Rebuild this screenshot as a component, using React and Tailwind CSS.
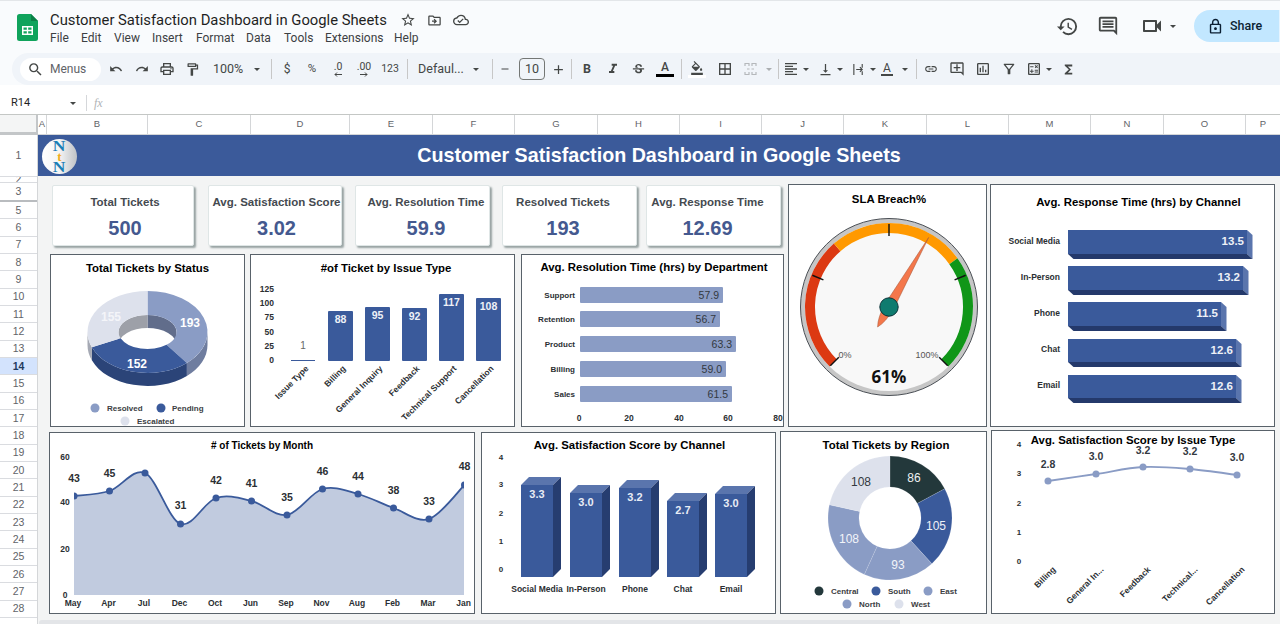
import React from "react";
import {
  MdSearch, MdUndo, MdRedo, MdOutlinePrint, MdOutlineFormatPaint, MdOutlineBorderAll,
  MdFormatAlignLeft, MdVerticalAlignBottom, MdOutlineInsertLink, MdOutlineAddComment, MdOutlineInsertChart,
  MdOutlineFilterAlt, MdOutlineCalculate, MdFunctions, MdHistory, MdOutlineComment, MdOutlineVideocam,
  MdOutlineLock, MdStarBorder, MdOutlineDriveFileMove, MdOutlineCloudDone, MdFormatItalic, MdStrikethroughS,
  MdOutlineFormatColorFill, MdAdd, MdRemove,
} from "react-icons/md";

const BLUE = "#3a5a9b";
const MID = "#8a9cc5";
const PALE = "#dde1ec";
const INK = "#2b2f33";

const pt = (cx, cy, rx, ry, deg) => {
  const r = (deg * Math.PI) / 180;
  return [cx + rx * Math.sin(r), cy - ry * Math.cos(r)];
};

const sector = (cx, cy, rx, ry, irx, iry, a, b) => {
  const [x1, y1] = pt(cx, cy, rx, ry, a);
  const [x2, y2] = pt(cx, cy, rx, ry, b);
  const [x3, y3] = pt(cx, cy, irx, iry, b);
  const [x4, y4] = pt(cx, cy, irx, iry, a);
  const big = b - a > 180 ? 1 : 0;
  return `M${x1} ${y1}A${rx} ${ry} 0 ${big} 1 ${x2} ${y2}L${x3} ${y3}A${irx} ${iry} 0 ${big} 0 ${x4} ${y4}Z`;
};

const wall = (cx, cy, rx, ry, a, b, d) => {
  const [x1, y1] = pt(cx, cy, rx, ry, a);
  const [x2, y2] = pt(cx, cy, rx, ry, b);
  return `M${x1} ${y1}A${rx} ${ry} 0 0 1 ${x2} ${y2}L${x2} ${y2 + d}A${rx} ${ry} 0 0 0 ${x1} ${y1 + d}Z`;
};

const smooth = (p) => {
  let d = `M${p[0][0]} ${p[0][1]}`;
  for (let i = 0; i < p.length - 1; i++) {
    const a = p[i - 1] || p[i];
    const b = p[i];
    const c = p[i + 1];
    const e = p[i + 2] || c;
    d += `C${b[0] + (c[0] - a[0]) / 6} ${b[1] + (c[1] - a[1]) / 6} ${c[0] - (e[0] - b[0]) / 6} ${c[1] - (e[1] - b[1]) / 6} ${c[0]} ${c[1]}`;
  }
  return d;
};

const T = ({ x, y, s = 8, w = 700, c = INK, a = "middle", rot, children }) => (
  <text
    x={x}
    y={y}
    dy=".35em"
    fontSize={s}
    fontWeight={w}
    fill={c}
    textAnchor={a}
    transform={rot ? `rotate(${rot} ${x} ${y})` : undefined}
  >
    {children}
  </text>
);

const Card = ({ x, y, w, h, th, cls, titleCls, title, children }) => (
  <div className={`shrink-0 border border-[#59626a] bg-white flex flex-col ${cls}`}>
    <div className={`shrink-0 flex items-center justify-center pt-[2px] font-bold text-black whitespace-nowrap ${titleCls}`}>{title}</div>
    <svg width={w - 2} height={h - 2 - th} viewBox={`${x + 1} ${y + 1 + th} ${w - 2} ${h - 2 - th}`} className="block overflow-visible">
      {children}
    </svg>
  </div>
);

const Kpi = ({ cls, title, value }) => (
  <div className={`shrink-0 h-[61px] bg-white border border-[#dfe6e6] rounded-[2px] shadow-[2px_2px_2px_#98a3a3] flex flex-col items-center ${cls}`}>
    <div className="mt-[9px] h-[15px] leading-[15px] text-[11.5px] font-bold text-[#454a50] whitespace-nowrap">{title}</div>
    <div className="mt-[6px] h-[24px] leading-[24px] text-[20px] font-bold text-[#44598f]">{value}</div>
  </div>
);

const StatusDonut = () => {
  const [cx, cy, rx, ry, irx, iry, d] = [147.5, 332, 60, 41, 29, 17, 13];
  return (
    <>
      <path d={wall(cx, cy, irx, iry, 0, 90, d)} fill="#616d8b" />
      <path d={wall(cx, cy, irx, iry, -90, 0, d)} fill="#9da0a8" />
      <path d={wall(cx, cy, rx, ry, 90, 139, d)} fill="#6f7d9f" />
      <path d={wall(cx, cy, rx, ry, 139, 248, d)} fill="#2b4478" />
      <path d={wall(cx, cy, rx, ry, 248, 270, d)} fill="#a5a9b4" />
      <path d={sector(cx, cy, rx, ry, irx, iry, 0, 139)} fill={MID} />
      <path d={sector(cx, cy, rx, ry, irx, iry, 139, 248)} fill={BLUE} />
      <path d={sector(cx, cy, rx, ry, irx, iry, 248, 360)} fill={PALE} />
      <T x={190} y={323} s={12} c="#fff">193</T>
      <T x={137} y={364} s={12} c="#fff">152</T>
      <T x={111} y={317} s={12} c="#f4f5f9">155</T>
      <circle cx={95} cy={408} r={4.5} fill={MID} />
      <T x={107} y={408} a="start" c="#3c4043">Resolved</T>
      <circle cx={161} cy={408} r={4.5} fill={BLUE} />
      <T x={172} y={408} a="start" c="#3c4043">Pending</T>
      <circle cx={125} cy={421} r={4.5} fill={PALE} />
      <T x={137} y={421} a="start" c="#3c4043">Escalated</T>
    </>
  );
};

const IssueBars = () => {
  const bars = [
    ["Billing", 328, 311, 88],
    ["General Inquiry", 365, 307, 95],
    ["Feedback", 402, 308, 92],
    ["Technical Support", 439, 294, 117],
    ["Cancellation", 476, 298, 108],
  ];
  return (
    <>
      {[[125, 289], [100, 303], [75, 317], [50, 332], [25, 346], [0, 360]].map(([v, y]) => (
        <T key={v} x={274} y={y} s={8.5} a="end">{v}</T>
      ))}
      <rect x={291} y={360} width={24} height={1} fill={BLUE} />
      <T x={303} y={345} s={10} w={400} c="#666">1</T>
      <T x={307} y={367} s={8.5} a="end" rot={-45}>Issue Type</T>
      {bars.map(([n, x, top, v]) => (
        <g key={n}>
          <rect x={x} y={top} width={25} height={361 - top} rx={1} fill={BLUE} />
          <T x={x + 12.5} y={top + 8} s={10.5} w={600} c="#eef1f7">{v}</T>
          <T x={x + 16} y={367} s={8.5} a="end" rot={-45}>{n}</T>
        </g>
      ))}
    </>
  );
};

const DeptBars = () => {
  const rows = [
    ["Support", 287, 723, "57.9"],
    ["Retention", 311, 720, "56.7"],
    ["Product", 336, 736, "63.3"],
    ["Billing", 361, 726, "59.0"],
    ["Sales", 386, 732, "61.5"],
  ];
  return (
    <>
      {rows.map(([n, y, end, v]) => (
        <g key={n}>
          <T x={575} y={y + 8} a="end">{n}</T>
          <rect x={580} y={y} width={end - 580} height={16} rx={1} fill={MID} />
          <T x={end - 4} y={y + 8} s={10.5} w={400} a="end" c="#33393f">{v}</T>
        </g>
      ))}
      {[[0, 579], [20, 629], [40, 679], [60, 728], [80, 778]].map(([v, x]) => (
        <T key={v} x={x} y={418} s={8.5}>{v}</T>
      ))}
    </>
  );
};

const Gauge = () => {
  const [cx, cy] = [889, 307];
  const arc = (a, b, c) => {
    const [x1, y1] = pt(cx, cy, 79, 79, a);
    const [x2, y2] = pt(cx, cy, 79, 79, b);
    return <path d={`M${x1} ${y1}A79 79 0 0 1 ${x2} ${y2}`} fill="none" stroke={c} strokeWidth={10} />;
  };
  return (
    <>
      <circle cx={cx} cy={cy} r={88.5} fill="#c6c6c6" stroke="#4a4f55" strokeWidth={1} />
      <circle cx={cx} cy={cy} r={84} fill="#f8f8f8" />
      {arc(-135, -41, "#dc3912")}
      {arc(-41, 54.6, "#ff9900")}
      {arc(54.6, 135, "#109618")}
      {[-135, -67.5, 0, 67.5, 135].map((a) => {
        const [x1, y1] = pt(cx, cy, 71, 71, a);
        const [x2, y2] = pt(cx, cy, 83, 83, a);
        return <line key={a} x1={x1} y1={y1} x2={x2} y2={y2} stroke="#111" strokeWidth={1.4} />;
      })}
      <T x={845} y={355} s={9} w={400} c="#555">0%</T>
      <T x={927} y={355} s={9} w={400} c="#555">100%</T>
      <g transform={`rotate(29.7 ${cx} ${cy})`}>
        <path d={`M${cx} ${cy - 80}L${cx + 5} ${cy}Q${cx + 4.5} ${cy + 15} ${cx} ${cy + 23}Q${cx - 4.5} ${cy + 15} ${cx - 5} ${cy}Z`} fill="#f4774b" stroke="#a85a3c" strokeWidth={0.5} />
      </g>
      <circle cx={cx} cy={cy} r={9.2} fill="#0f7b6f" stroke="#0b3238" strokeWidth={1} />
      <text x={889} y={377} dy=".35em" fontSize={17} fontWeight={700} fill="#111" textAnchor="middle" fontFamily="'Open Sans', sans-serif">61%</text>
    </>
  );
};

const ResponseBars = () => {
  const rows = [
    ["Social Media", 230, 254, 1247, "13.5"],
    ["In-Person", 266, 290, 1243, "13.2"],
    ["Phone", 302, 326, 1221, "11.5"],
    ["Chat", 339, 362, 1236, "12.6"],
    ["Email", 375, 398, 1236, "12.6"],
  ];
  return (
    <>
      {rows.map(([n, top, bot, r, v]) => (
        <g key={n}>
          <T x={1060} y={(top + bot) / 2 - 1} s={8.5} a="end">{n}</T>
          <rect x={1068} y={top} width={r - 1068} height={bot - top} fill={BLUE} />
          <path d={`M${r} ${top}L${r + 5.5} ${top + 5}V${bot + 5}L${r} ${bot}Z`} fill="#5a75ad" />
          <path d={`M1068 ${bot}H${r}L${r + 5.5} ${bot + 5}H1073.5Z`} fill="#24396b" />
          <T x={r - 3} y={(top + bot) / 2 - 1} s={11.5} w={600} a="end" c="#eef1f7">{v}</T>
        </g>
      ))}
    </>
  );
};

const MonthArea = () => {
  const ys = [496, 491, 473, 524, 498, 501, 515, 489, 494, 508, 519, 485];
  const names = ["May", "Apr", "Jul", "Dec", "Oct", "Jun", "Sep", "Nov", "Aug", "Feb", "Mar", "Jan"];
  const pts = ys.map((y, i) => [74 + i * 35.5, y]);
  const line = smooth(pts);
  const labels = [[0, 43, 478], [1, 45, 473], [3, 31, 505], [4, 42, 480], [5, 41, 483], [6, 35, 497], [7, 46, 471], [8, 44, 476], [9, 38, 490], [10, 33, 501], [11, 48, 466]];
  return (
    <>
      <defs>
        <clipPath id="monthClip"><rect x={74} y={440} width={390} height={160} /></clipPath>
      </defs>
      {[[60, 457], [40, 502], [20, 549], [0, 595]].map(([v, y]) => (
        <T key={v} x={65} y={y} s={8.5}>{v}</T>
      ))}
      <g clipPath="url(#monthClip)">
        <path d={`${line}V595H74Z`} fill="#c1cbdf" />
        <path d={line} fill="none" stroke={BLUE} strokeWidth={1.8} />
        {pts.map(([x, y]) => <circle key={x} cx={x} cy={y} r={3.5} fill={BLUE} />)}
      </g>
      {labels.map(([i, v, y]) => (
        <T key={i} x={pts[i][0]} y={y} s={10.5}>{v}</T>
      ))}
      {names.map((n, i) => (
        <T key={n} x={73 + i * 35.5} y={603} s={8.5}>{n}</T>
      ))}
    </>
  );
};

const ChannelBars = () => {
  const rows = [
    ["Social Media", 521, 485, "3.3"],
    ["In-Person", 570, 493, "3.0"],
    ["Phone", 619, 488, "3.2"],
    ["Chat", 667, 501, "2.7"],
    ["Email", 715, 494, "3.0"],
  ];
  return (
    <>
      {[[4, 457], [3, 484.5], [2, 513], [1, 541], [0, 569]].map(([v, y]) => (
        <T key={v} x={501} y={y}>{v}</T>
      ))}
      {rows.map(([n, x, top, v]) => (
        <g key={n}>
          <path d={`M${x} ${top}L${x + 8} ${top - 8}H${x + 40}L${x + 32} ${top}Z`} fill="#5a75ad" />
          <path d={`M${x + 32} ${top}L${x + 40} ${top - 8}V569L${x + 32} 577Z`} fill="#263d70" />
          <rect x={x} y={top} width={32} height={577 - top} fill={BLUE} />
          <T x={x + 16} y={top + 9} s={11} w={600} c="#e8ecf5">{v}</T>
          <T x={x + 16} y={589} s={8.5}>{n}</T>
        </g>
      ))}
    </>
  );
};

const RegionDonut = () => {
  const parts = [[86, "#23383b"], [105, BLUE], [93, MID], [108, MID], [108, PALE]];
  let start = 0;
  return (
    <>
      {parts.map(([v, c], i) => {
        const end = start + (v / 500) * 360;
        const d = sector(890, 518, 62, 62, 31, 31, start, end);
        start = end;
        return <path key={i} d={d} fill={c} stroke="#fff" strokeOpacity={0.25} strokeWidth={0.5} />;
      })}
      <T x={914} y={478} s={12} w={400} c="#eef1f2">86</T>
      <T x={936} y={526} s={12} w={400} c="#eef1f7">105</T>
      <T x={898} y={565} s={12} w={400} c="#f2f4f9">93</T>
      <T x={849} y={539} s={12} w={400} c="#f2f4f9">108</T>
      <T x={861} y={482} s={12} w={400} c="#33393f">108</T>
      {[[819, 591, "#23383b", "Central"], [876, 591, BLUE, "South"], [928, 591, MID, "East"], [847, 604, MID, "North"], [899, 604, PALE, "West"]].map(([x, y, c, n]) => (
        <g key={n}>
          <circle cx={x} cy={y} r={4.5} fill={c} />
          <T x={x + 12} y={y} a="start" c="#3c4043">{n}</T>
        </g>
      ))}
    </>
  );
};

const IssueLine = () => {
  const pts = [[1048, 481], [1096, 474], [1143, 467], [1190, 469], [1237, 475]];
  const labels = [["2.8", 464], ["3.0", 456], ["3.2", 450], ["3.2", 451], ["3.0", 457]];
  const names = ["Billing", "General In...", "Feedback", "Technical...", "Cancellation"];
  return (
    <>
      {[[4, 444], [3, 473], [2, 503], [1, 532], [0, 561]].map(([v, y]) => (
        <T key={v} x={1019} y={y}>{v}</T>
      ))}
      <path d={smooth(pts)} fill="none" stroke={MID} strokeWidth={1.8} />
      {pts.map(([x, y], i) => (
        <g key={x}>
          <circle cx={x} cy={y} r={3.5} fill={MID} />
          <T x={x} y={labels[i][1]} s={10.5} w={600} c="#33393f">{labels[i][0]}</T>
          <T x={x + 6} y={568} s={8.5} a="end" rot={-45}>{names[i]}</T>
        </g>
      ))}
    </>
  );
};

const Caret = ({ cls }) => (
  <span className={`flex items-center justify-center shrink-0 ${cls}`}>
    <span className="w-0 h-0 border-l-[3px] border-r-[3px] border-t-[3px] border-l-transparent border-r-transparent border-t-[#444746]" />
  </span>
);

const Slot = ({ cls, children }) => (
  <span className={`flex items-center justify-center shrink-0 text-[#444746] ${cls}`}>{children}</span>
);

const Sep = ({ cls }) => (
  <span className={`flex items-center justify-center shrink-0 ${cls}`}>
    <span className="w-px h-[20px] bg-[#c7c7c7]" />
  </span>
);

const Decimal = ({ label, arrow }) => (
  <span className="flex flex-col items-center text-[10.5px] leading-[10px]">
    {label}
    <svg width="10" height="5" viewBox="0 0 10 5" fill="none" stroke="currentColor" strokeWidth="1">
      <path d={arrow} />
    </svg>
  </span>
);

const Toolbar = () => (
  <div className="ml-[12px] h-[32px] bg-[#f0f4f9] rounded-l-full flex items-center text-[12px] font-['Roboto',sans-serif]">
    <div className="ml-[8px] w-[81px] h-[23px] shrink-0 bg-white rounded-full flex items-center text-[#5f6368]">
      <MdSearch className="ml-[7px] text-[17px] text-[#444746]" />
      <span className="ml-[6px]">Menus</span>
    </div>
    <Slot cls="ml-[2px] w-[26px]"><MdUndo size={14} /></Slot>
    <Slot cls="w-[25px]"><MdRedo size={14} /></Slot>
    <Slot cls="w-[26px]"><MdOutlinePrint size={16} /></Slot>
    <Slot cls="w-[25px]"><MdOutlineFormatPaint size={15} /></Slot>
    <Slot cls="w-[46px] text-[12.5px]">100%</Slot>
    <Caret cls="w-[12px]" />
    <Sep cls="w-[16px]" />
    <Slot cls="w-[16px]">$</Slot>
    <Slot cls="w-[34px] text-[11.5px]">%</Slot>
    <Slot cls="w-[18px]"><Decimal label=".0" arrow="M9 2.5H2M4 .5 2 2.5 4 4.5" /></Slot>
    <Slot cls="w-[34px]"><Decimal label=".00" arrow="M1 2.5H8M6 .5 8 2.5 6 4.5" /></Slot>
    <Slot cls="w-[18px] text-[10.5px]">123</Slot>
    <Sep cls="w-[16px]" />
    <Slot cls="w-[52px] text-[12.5px]">Defaul...</Slot>
    <Caret cls="w-[18px]" />
    <Sep cls="w-[14px]" />
    <Slot cls="w-[12px] mr-[8px]"><MdRemove size={14} /></Slot>
    <span className="w-[26px] h-[22px] shrink-0 border border-[#747775] rounded-[4px] flex items-center justify-center text-[#444746] text-[12.5px]">10</span>
    <Slot cls="ml-[3px] w-[20px]"><MdAdd size={15} /></Slot>
    <Sep cls="w-[6px]" />
    <Slot cls="w-[26px] font-bold text-[12.5px]">B</Slot>
    <Slot cls="w-[25px]"><MdFormatItalic size={16} /></Slot>
    <Slot cls="w-[26px]"><MdStrikethroughS size={15} /></Slot>
    <Slot cls="w-[28px]">
      <span className="flex flex-col items-center text-[12px] leading-[13px] font-medium">A<span className="w-[18px] h-[3px] bg-black" /></span>
    </Slot>
    <Sep cls="w-[4px]" />
    <Slot cls="w-[28px]">
      <span className="flex flex-col items-center"><MdOutlineFormatColorFill size={14} /><span className="w-[18px] h-[3px] bg-white" /></span>
    </Slot>
    <Slot cls="w-[28px]"><MdOutlineBorderAll size={16} /></Slot>
    <Slot cls="w-[22px] text-[#b5b8bb]">
      <svg width="13" height="14" viewBox="0 0 13 14" fill="none" stroke="currentColor" strokeWidth="1.2">
        <path d="M5 4V1.5H1V4M8 4V1.5H12V4M5 10v2.500H1V10M8 10v2.500H12V10M3 7h2.500M10 7H7.500" />
      </svg>
    </Slot>
    <Caret cls="w-[16px] opacity-40" />
    <Sep cls="w-[2px]" />
    <Slot cls="w-[23px]"><MdFormatAlignLeft size={16} /></Slot>
    <Caret cls="w-[8px]" />
    <Slot cls="ml-[3px] w-[24px]"><MdVerticalAlignBottom size={15} /></Slot>
    <Caret cls="w-[5px]" />
    <Slot cls="ml-[4px] w-[24px]">
      <svg width="13" height="13" viewBox="0 0 14 14" fill="none" stroke="currentColor" strokeWidth="1.2">
        <path d="M2 1v12M11 1v4M11 9v4M4.5 7h6.500M8.500 4.500 11 7 8.500 9.500" />
      </svg>
    </Slot>
    <Caret cls="w-[5px]" />
    <Slot cls="w-[24px]">
      <span className="flex flex-col items-center text-[12px] leading-[12px]">A<span className="w-[12px] h-[1.5px] bg-[#444746]" /></span>
    </Slot>
    <Caret cls="ml-[3px] w-[6px]" />
    <Sep cls="w-[16px]" />
    <Slot cls="w-[14px] mr-[6px]"><MdOutlineInsertLink size={16} /></Slot>
    <Slot cls="w-[26px]"><MdOutlineAddComment size={16} /></Slot>
    <Slot cls="w-[26px]"><MdOutlineInsertChart size={16} /></Slot>
    <Slot cls="w-[26px]"><MdOutlineFilterAlt size={16} /></Slot>
    <Slot cls="w-[24px]"><MdOutlineCalculate size={16} /></Slot>
    <Caret cls="w-[5px]" />
    <Slot cls="ml-[5px] w-[24px]"><MdFunctions size={15} /></Slot>
  </div>
);

const columns = [
  ["A", "w-[9px]"], ["B", "w-[101px]"], ["C", "w-[103px]"], ["D", "w-[99px]"], ["E", "w-[83px]"], ["F", "w-[82px]"],
  ["G", "w-[83px]"], ["H", "w-[82px]"], ["I", "w-[82px]"], ["J", "w-[82px]"], ["K", "w-[83px]"], ["L", "w-[82px]"],
  ["M", "w-[82px]"], ["N", "w-[73px]"], ["O", "w-[82px]"], ["P", "w-[35px]"],
];

const RowHead = ({ n, cls }) => (
  <div className={`flex items-center justify-center overflow-hidden border-b border-[#dadce0] pt-px text-[10.5px] ${n === 14 ? "bg-[#d3e3fd] font-bold text-[#1f3a5f]" : "text-[#5f6368]"} ${cls}`}>
    {n}
  </div>
);

const rowNums = [5, 6, 7, 8, 9, 10, 11, 12, 13, 14, 15, 16, 17, 18, 19, 20, 21, 22, 23, 24, 25, 26, 27, 28];

export default function App() {
  return (
    <div className="w-[1280px] h-[624px] overflow-hidden bg-white font-['Liberation_Sans',Arial,sans-serif]">
      <div className="bg-[#f9fbfd] h-[85px] border-t border-[#e3e6e9]">
        <div className="h-[52px] flex">
          <svg width="21" height="27" viewBox="0 0 21 27" className="ml-[17px] mt-[13px] shrink-0">
            <path d="M2.5 0H14l7 7v17.500a2.500 2.500 0 0 1-2.500 2.500h-16A2.500 2.500 0 0 1 0 24.500V2.500A2.500 2.500 0 0 1 2.500 0Z" fill="#10a35c" />
            <path d="M14 0l7 7h-7z" fill="#0b7f46" />
            <path d="M5 12h11v9H5zM6.500 13.500v2.200h3.300v-2.200zM11.200 13.500v2.200h3.300v-2.200zM6.500 17.200v2.300h3.300v-2.300zM11.200 17.200v2.300h3.300v-2.300z" fill="#fff" fillRule="evenodd" />
          </svg>
          <div className="ml-[12px] flex flex-col font-['Roboto',sans-serif]">
            <div className="mt-[9px] h-[20px] flex items-center">
              <span className="text-[14.8px] leading-[20px] text-[#1f1f1f] whitespace-nowrap">Customer Satisfaction Dashboard in Google Sheets</span>
              <MdStarBorder className="ml-[13px] text-[16px] text-[#444746]" />
              <MdOutlineDriveFileMove className="ml-[11px] text-[15px] text-[#444746]" />
              <MdOutlineCloudDone className="ml-[11px] text-[16px] text-[#444746]" />
            </div>
            <div className="mt-[-1px] h-[17px] flex items-center text-[12px] text-[#3c4043]">
              <span className="w-[31px]">File</span>
              <span className="w-[33px]">Edit</span>
              <span className="w-[38px]">View</span>
              <span className="w-[44px]">Insert</span>
              <span className="w-[50px]">Format</span>
              <span className="w-[38px]">Data</span>
              <span className="w-[41px]">Tools</span>
              <span className="w-[69px]">Extensions</span>
              <span>Help</span>
            </div>
          </div>
          <div className="ml-auto flex items-center h-[50px] text-[#444746]">
            <MdHistory size={23} />
            <MdOutlineComment size={22} className="ml-[18px]" />
            <MdOutlineVideocam size={24} className="ml-[21px]" />
            <Caret cls="w-[12px] ml-[3px]" />
            <div className="ml-[15px] w-[86px] h-[32px] bg-[#c2e7ff] rounded-l-full flex items-center text-[#0b1f33] font-['Roboto',sans-serif]">
              <MdOutlineLock size={17} className="ml-[13px]" />
              <span className="ml-[6px] text-[12.5px] font-medium">Share</span>
              <span className="ml-auto w-px h-[32px] bg-[#e6f4ff]" />
            </div>
          </div>
        </div>
        <Toolbar />
      </div>

      <div className="h-[30px] flex items-center border-b border-[#c4c7c5] pt-[7px] font-['Roboto',sans-serif]">
        <span className="ml-[11px] w-[56px] text-[11px] text-[#1f1f1f]">R14</span>
        <Caret cls="w-[12px]" />
        <span className="ml-[7px] w-px h-[16px] bg-[#d5d7da]" />
        <span className="ml-[7px] text-[12px] italic text-[#b0b3b6] font-['Liberation_Serif',serif]">fx</span>
      </div>

      <div className="h-[20px] flex">
        <div className="w-[38px] shrink-0 bg-[#f4f5f5] border-r-[2px] border-b-[3px] border-[#c3c6c8]" />
        {columns.map(([c, w]) => (
          <div key={c} className={`shrink-0 flex items-center justify-center border-r border-b border-[#d4d6d8] text-[9.5px] text-[#5f6368] ${w}`}>{c}</div>
        ))}
      </div>

      <div className="flex">
        <div className="w-[38px] shrink-0 border-r border-[#d4d6d8]">
          <RowHead n={1} cls="h-[42px]" />
          <RowHead n={2} cls="h-[6px]" />
          <RowHead n={3} cls="h-[19px] border-b-[2px] border-b-[#b9bcbf]" />
          {rowNums.map((n) => (
            <RowHead key={n} n={n} cls="h-[17.33px]" />
          ))}
        </div>

        <div className="flex-1 bg-[#f3f4f4]">
          <div className="relative h-[41px] bg-[#3b5a9a] flex items-center justify-center">
            <div className="absolute left-[4px] top-[4px] w-[35px] h-[35px] rounded-full bg-gradient-to-r from-white via-[#f4f4f4] to-[#bfc2c6] flex flex-col items-center justify-center font-['Liberation_Serif',serif] font-bold">
              <span className="h-[11px] leading-[11px] text-[14px] scale-x-125 text-[#1c7fb6]">N</span>
              <span className="h-[10px] leading-[10px] text-[13px] text-[#f0ad1e]">t</span>
              <span className="h-[11px] leading-[11px] text-[14px] scale-x-125 text-[#1c7fb6]">N</span>
            </div>
            <h1 className="text-[19.7px] font-bold text-white whitespace-nowrap">Customer Satisfaction Dashboard in Google Sheets</h1>
          </div>

          <div className="h-[444px] pl-[11px] pt-[8px]">
            <div className="flex">
              <div className="ml-[1px] w-[735px] shrink-0 pt-[1px]">
                <div className="flex pl-[2px]">
                  <Kpi cls="w-[142px] pl-[4px]" title="Total Tickets" value="500" />
                  <Kpi cls="ml-[14px] w-[134px] pl-[3px]" title="Avg. Satisfaction Score" value="3.02" />
                  <Kpi cls="ml-[13px] w-[135px] pl-[7px]" title="Avg. Resolution Time" value="59.9" />
                  <Kpi cls="ml-[12px] w-[135px] pr-[13px]" title="Resolved Tickets" value="193" />
                  <Kpi cls="ml-[9px] w-[135px] pr-[12px]" title="Avg. Response Time" value="12.69" />
                </div>
                <div className="flex mt-[8px]">
                  <Card x={50} y={254} w={195} h={173} th={26} cls="w-[195px] h-[173px]" titleCls="h-[26px] text-[11.4px]" title="Total Tickets by Status">
                    <StatusDonut />
                  </Card>
                  <div className="ml-[5px]">
                    <Card x={250} y={254} w={265} h={173} th={26} cls="w-[265px] h-[173px]" titleCls="h-[26px] pl-[7px] text-[11.4px]" title="#of Ticket by Issue Type">
                      <IssueBars />
                    </Card>
                  </div>
                  <div className="ml-[6px]">
                    <Card x={521} y={254} w={263} h={173} th={24} cls="w-[263px] h-[173px]" titleCls="h-[24px] pl-[3px] text-[11.4px]" title="Avg. Resolution Time (hrs) by Department">
                      <DeptBars />
                    </Card>
                  </div>
                </div>
              </div>
              <div className="ml-[3px]">
                <Card x={788} y={184} w={199} h={243} th={28} cls="w-[199px] h-[243px]" titleCls="h-[28px] pl-[3px] text-[11.4px]" title="SLA Breach%">
                  <Gauge />
                </Card>
              </div>
              <div className="ml-[3px]">
                <Card x={990} y={184} w={285} h={243} th={34} cls="w-[285px] h-[243px]" titleCls="h-[34px] pl-[12px] text-[11.4px]" title="Avg. Response Time (hrs) by Channel">
                  <ResponseBars />
                </Card>
              </div>
            </div>

            <div className="flex items-end mt-[3px] h-[184px]">
              <Card x={49} y={432} w={426} h={182} th={22} cls="w-[426px] h-[182px]" titleCls="h-[22px] text-[10px]" title="# of Tickets by Month">
                <MonthArea />
              </Card>
              <div className="ml-[6px]">
                <Card x={481} y={432} w={295} h={182} th={24} cls="w-[295px] h-[182px]" titleCls="h-[24px] pl-[2px] text-[11.4px]" title="Avg. Satisfaction Score by Channel">
                  <ChannelBars />
                </Card>
              </div>
              <div className="ml-[4px]">
                <Card x={780} y={431} w={207} h={183} th={26} cls="w-[207px] h-[183px]" titleCls="h-[26px] pl-[5px] text-[11.4px]" title="Total Tickets by Region">
                  <RegionDonut />
                </Card>
              </div>
              <div className="ml-[4px]">
                <Card x={991} y={430} w={284} h={184} th={18} cls="w-[284px] h-[184px]" titleCls="h-[18px] text-[11.4px]" title="Avg. Satisfaction Score by Issue Type">
                  <IssueLine />
                </Card>
              </div>
            </div>
          </div>
          <div className="ml-[1px] w-[861px] h-[10px] rounded-l-[3px] bg-[#e3e5e8]" />
        </div>
      </div>
    </div>
  );
}
